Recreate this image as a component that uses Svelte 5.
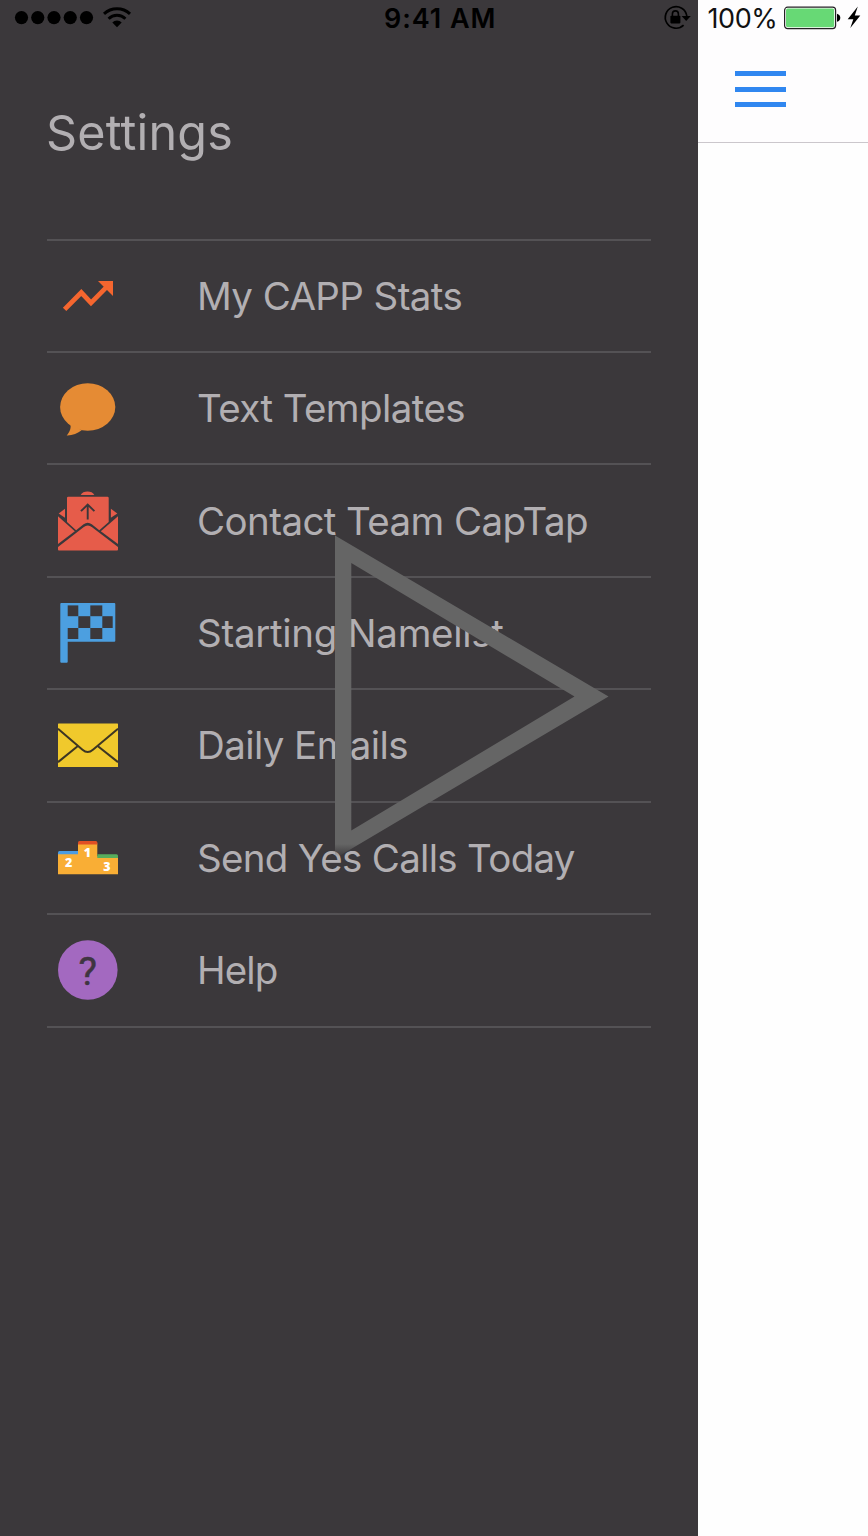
<script>
  const items = [
    { icon: 'trend', label: 'My CAPP Stats', spacing: -0.6 },
    { icon: 'bubble', label: 'Text Templates', spacing: -0.58 },
    { icon: 'contact', label: 'Contact Team CapTap', spacing: -0.59 },
    { icon: 'flag', label: 'Starting Namelist', spacing: -0.3 },
    { icon: 'mail', label: 'Daily Emails', spacing: -0.6 },
    { icon: 'podium', label: 'Send Yes Calls Today', spacing: -0.7 },
    { icon: 'help', label: 'Help', spacing: -0.9 }
  ];
  const squares = [
    [11.7, 4.4, 10.6, 10.8], [34.3, 4.4, 12, 10.8],
    [22.3, 15.2, 12, 11.8], [46.3, 15.2, 10.4, 11.8],
    [11.7, 27, 10.6, 11], [34.3, 27, 12, 11]
  ];
</script>

<div class="screen">
  <aside class="drawer">
    <div class="status">
      <svg width="120" height="36" viewBox="0 0 120 36">
        {#each [0, 1, 2, 3, 4] as i}
          <circle cx={7.5 + i * 16.25} cy="17.6" r="6.6" />
        {/each}
        <g fill="none" stroke="#000" stroke-width="3">
          <path d="M90 13.800a19.200 19.200 0 0 1 26 0" />
          <path d="M94.600 18.700a12 12 0 0 1 16.800 0" />
        </g>
        <path d="M98.300 22.400a6.600 6.600 0 0 1 9.400 0L103 27.200z" />
      </svg>
      <span class="time">9:41 AM</span>
      <svg width="30" height="36" viewBox="0 0 30 36">
        <path d="M20.600 25.200A10.800 10.800 0 1 1 23.800 16" fill="none" stroke="#000" stroke-width="1.700" />
        <path d="M18.600 16h9.200l-4.600 5z" />
        <rect x="7.400" y="15.800" width="10" height="7.600" rx=".8" />
        <path d="M9.400 16.500v-2.600a3 3 0 0 1 6 0v2.600" fill="none" stroke="#000" stroke-width="1.600" />
      </svg>
    </div>
    <h1>Settings</h1>
    <ul>
      {#each items as item}
        <li>
          <svg class="icon" width="64" height="64" viewBox="0 0 64 64">
            {#if item.icon === 'trend'}
              <path d="M8.600 45.400 25.300 28.500 35 38.900 51 22.600" fill="none" stroke="#f5662f" stroke-width="4.800" />
              <path d="M42 17h15v15z" fill="#f5662f" />
            {:else if item.icon === 'bubble'}
              <ellipse cx="31.700" cy="31" rx="27.600" ry="23.800" fill="#e58b34" />
              <path d="M14 47.700c1.800 3.500-.4 8.400-3.300 11.800 5.500.2 11-2 15-5.200z" fill="#e58b34" />
            {:else if item.icon === 'contact'}
              <g fill="#e65c4a">
                <path d="M24.700 6c2-4.600 11.600-4.600 13.600 0z" />
                <path d="M12.200 7.700h39.300q1.200 0 1.200 1.200V33l-9.400 8.200-7.500-6q-4.100-3-8.200 0l-7.500 6L11 33V8.900q0-1.200 1.200-1.200z" />
                <path d="M2.700 24.500 9 19.800v9z" />
                <path d="M61.300 24.500 54.900 19.800v9z" />
                <path d="M2 27.300 18.800 42.200 2 55z" />
                <path d="M62 27.300 44.800 42.200 62 55z" />
                <path d="M2 58 27.500 38.300q4.300-3.400 8.600 0L62 58v2.600q0 .9-.9.900H2.900q-.9 0-.9-.9z" />
              </g>
              <path d="M31.700 30.500v-14M25 22.200l6.700-6.700 6.700 6.700" fill="none" stroke="#3b373a" stroke-width="1.900" />
            {:else if item.icon === 'flag'}
              <path d="M5.300 2h53q1 0 1 1v36.700q0 1-1 1H11.700v20q0 1-1 1H5.300q-1 0-1-1V3q0-1 1-1z" fill="#4c9fe0" />
              {#each squares as [x, y, w, h]}
                <rect {x} {y} width={w} height={h} fill="#3b383b" />
              {/each}
            {:else if item.icon === 'mail'}
              <rect x="2" y="10.500" width="60" height="43.500" rx=".6" fill="#f0c92c" />
              <path d="M2 15.700 26.500 36.700q5.200 4.600 10.400 0L62 15.700M2 49.100 21.300 33.500M62 49.100 42.300 33.500" fill="none" stroke="#3d3623" stroke-width="2" />
            {:else if item.icon === 'podium'}
              <g transform="translate(0 .3)">
                <path d="M2 27V48h60V30H41.300V17H22v10z" fill="#f9ae35" />
                <path d="M2 28v-1.900q0-1.500 1.500-1.500H22V28z" fill="#4b9ce2" />
                <path d="M22 18.200v-2.100q0-1.500 1.500-1.500h16.300q1.500 0 1.500 1.500v2.100z" fill="#e04f24" />
                <path d="M41.300 31.600V28h19.200q1.500 0 1.500 1.500v2.100z" fill="#57ad5c" />
                <g class="places">
                  <text x="12.700" y="41">2</text>
                  <text x="31.400" y="31">1</text>
                  <text x="51" y="44.600">3</text>
                </g>
              </g>
            {:else}
              <circle cx="31.800" cy="32" r="29.800" fill="#a369c0" />
              <text class="question" x="31.800" y="46.500">?</text>
            {/if}
          </svg>
          <span class="label" style="letter-spacing: {item.spacing}px">{item.label}</span>
        </li>
      {/each}
    </ul>
  </aside>

  <main>
    <header>
      <div class="power">
        <span>100%</span>
        <svg width="84" height="36" viewBox="0 0 84 36">
          <rect x=".6" y="7.200" width="51" height="21.400" rx="3" fill="#fff" stroke="#242124" stroke-width="1.200" />
          <rect x="2" y="8.600" width="48.200" height="18.600" rx="1.800" fill="#67d975" />
          <path d="M53 13.800q3.300 1 3.300 4t-3.300 4z" />
          <path d="M73.800 6.500 63.700 19.200h5.600l-3 8.800 10-12.500h-5.500z" />
        </svg>
      </div>
      <div class="burger"><i></i><i></i><i></i></div>
    </header>
  </main>

  <svg class="play" width="290" height="340" viewBox="325 526 290 340">
    <defs>
      <linearGradient id="fade" gradientUnits="userSpaceOnUse" x1="0" y1="844" x2="0" y2="857">
        <stop offset="0" stop-color="#656565" />
        <stop offset="1" stop-color="#656565" stop-opacity="0" />
      </linearGradient>
    </defs>
    <path fill="url(#fade)" fill-rule="evenodd" d="M335 535.500 608.500 696.500 335 858.500ZM351.300 563V830.500L574.500 696.500Z" />
  </svg>
</div>

<style>
  :global(body) { background: #fff; }
  .screen {
    position: relative;
    display: flex;
    width: 868px;
    height: 1536px;
    overflow: hidden;
    font-family: Inter, "Liberation Sans", sans-serif;
    background: #fff;
  }
  .drawer {
    box-sizing: border-box;
    width: 697.5px;
    flex: none;
    background: #3b383b;
    color: #b2afb2;
  }
  .status {
    display: grid;
    grid-template-columns: 370px 1fr 30px;
    height: 36px;
    padding: 0 4.5px 0 14px;
    color: #000;
  }
  .status svg, .power svg { display: block; }
  .time {
    font-size: 27px;
    font-weight: 600;
    line-height: 37px;
    letter-spacing: 0.95px;
  }
  h1 {
    margin: 68px 0 0 46px;
    font-size: 48.5px;
    font-weight: 400;
    line-height: 58px;
    letter-spacing: 0.15px;
  }
  ul {
    list-style: none;
    margin: 76.6px 46.5px 0 46.5px;
    padding: 0;
    border-top: 2px solid #545255;
  }
  li {
    display: flex;
    align-items: center;
    box-sizing: border-box;
    height: 112.43px;
    padding-left: 9.5px;
    border-bottom: 2px solid #545255;
  }
  .icon { flex: none; margin-right: 77px; }
  .label {
    font-size: 38.5px;
    line-height: 48px;
    white-space: nowrap;
  }
  .places { font: 800 12.5px "Open Sans", sans-serif; fill: #fff; text-anchor: middle; }
  .question { font: 400 39px Roboto, sans-serif; fill: #3f3541; stroke: #3f3541; stroke-width: 0.5px; text-anchor: middle; }
  main { flex: 1; background: #fefefe; }
  header {
    box-sizing: border-box;
    height: 143px;
    background: #fefdfe;
    border-bottom: 1px solid #cbc7cc;
  }
  .power { display: flex; height: 36px; }
  .power span {
    width: 76.5px;
    padding-left: 10px;
    font-size: 27px;
    line-height: 37px;
    letter-spacing: -0.4px;
    color: #111;
  }
  .burger {
    display: flex;
    flex-direction: column;
    gap: 10.5px;
    margin: 35px 0 0 37.5px;
    width: 51px;
  }
  .burger i { height: 5px; background: #3087f0; }
  .play { position: absolute; left: 325px; top: 526px; }
</style>
